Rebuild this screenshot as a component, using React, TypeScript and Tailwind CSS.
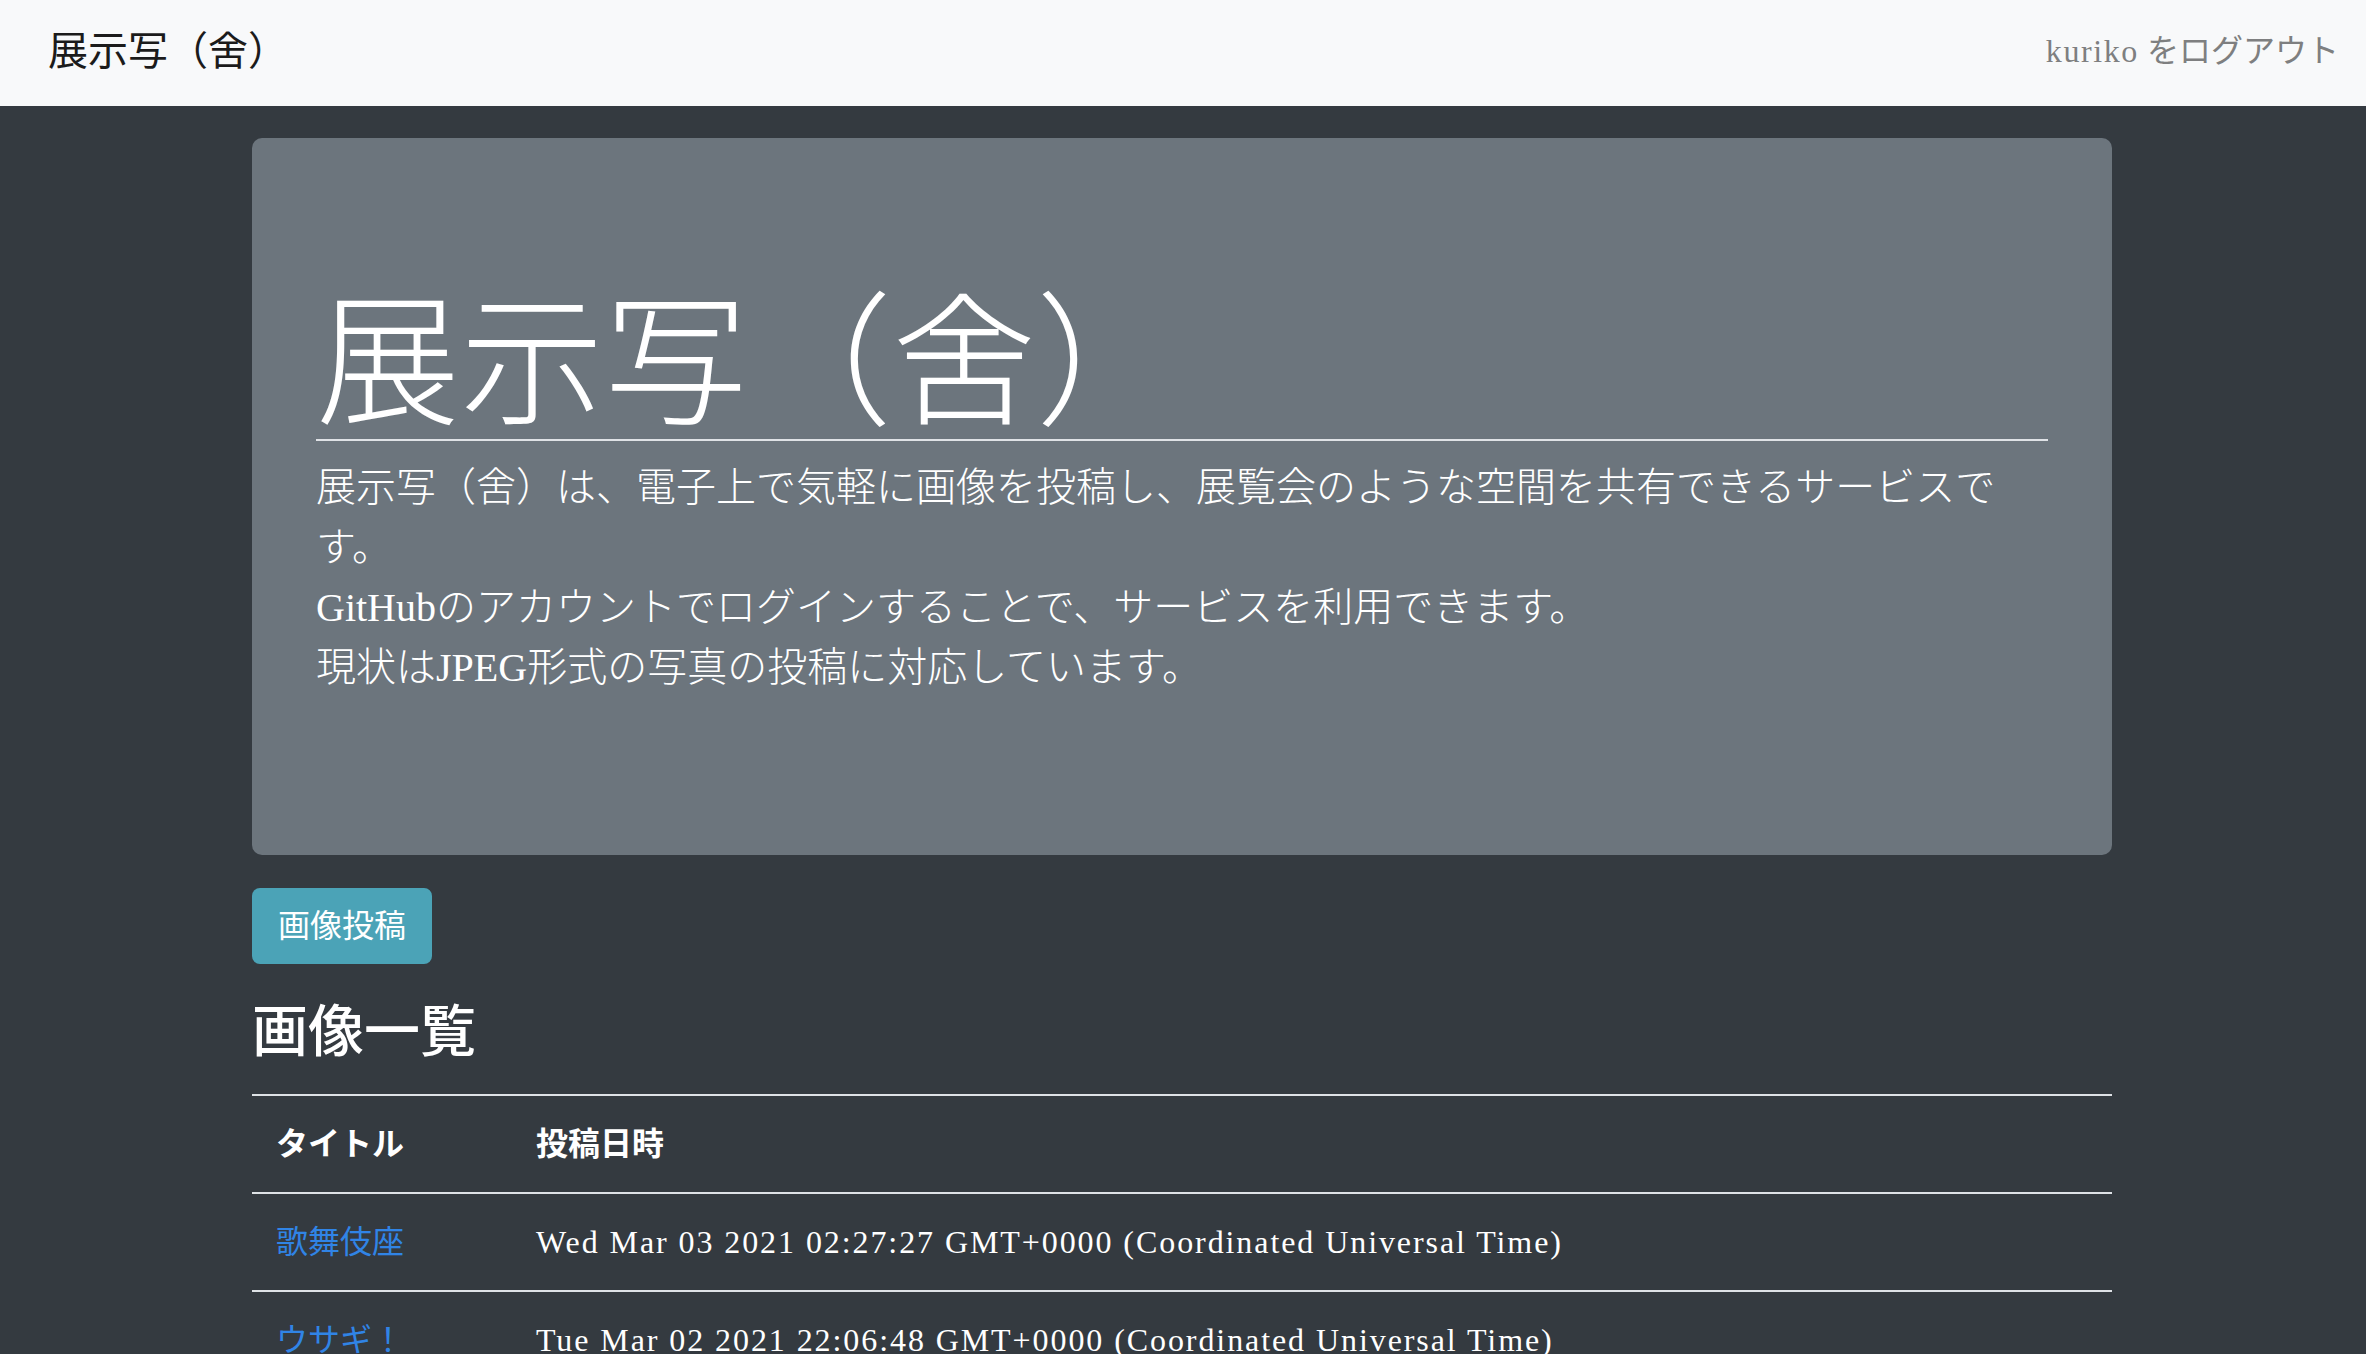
import React from 'react';

interface Photo {
  id: number;
  title: string;
  createdAt: string;
}

const PHOTOS: Photo[] = [
  { id: 1, title: '歌舞伎座', createdAt: 'Wed Mar 03 2021 02:27:27 GMT+0000 (Coordinated Universal Time)' },
  { id: 2, title: 'ウサギ！', createdAt: 'Tue Mar 02 2021 22:06:48 GMT+0000 (Coordinated Universal Time)' },
];

/* ---------------- NAVBAR ---------------- */
const Navbar: React.FC = () => (
  <nav className="h-[106px] shrink-0 bg-[#f8f9fa] flex items-center justify-between pl-[48px] pr-[27px]">
    <a href="#" className="text-[40px] leading-[60px] text-[#1b1b1b] -mt-[2px]">
      展示写（舍）
    </a>
    <a href="#" className="text-[32px] leading-[48px] text-[#7e7f80] -mt-[5px]">
      <span className="tracking-[0.05em]">kuriko</span> をログアウト
    </a>
  </nav>
);

/* ---------------- JUMBOTRON ---------------- */
const Jumbotron: React.FC = () => (
  <div className="rounded-[10px] bg-[#6c757d] px-[64px] pt-[155px] pb-[157px] text-white">
    <h1 className="text-[144px] leading-[146px] font-light">展示写（舍）</h1>
    <hr className="border-0 border-t-2 border-[#dfe2e6] mt-0 mb-[17px]" />
    <p className="text-[40px] leading-[60px] font-light">
      展示写（舍）は、電子上で気軽に画像を投稿し、展覧会のような空間を共有できるサービスです。
      <br />
      GitHubのアカウントでログインすることで、サービスを利用できます。
      <br />
      現状はJPEG形式の写真の投稿に対応しています。
    </p>
  </div>
);

/* ---------------- PHOTO TABLE ---------------- */
const PhotoTable: React.FC<{ photos: Photo[] }> = ({ photos }) => (
  <table className="w-full table-fixed border-collapse text-white text-[32px] leading-[48px]">
    <thead>
      <tr>
        <th className="w-[260px] text-left font-bold px-[24px] py-[24px] border-t-2 border-[#dee2e6]">
          タイトル
        </th>
        <th className="text-left font-bold px-[24px] py-[24px] border-t-2 border-[#dee2e6]">
          投稿日時
        </th>
      </tr>
    </thead>
    <tbody>
      {photos.map((p) => (
        <tr key={p.id}>
          <td className="px-[24px] py-[24px] border-t-2 border-[#dee2e6]">
            <a href="#" className="text-[#3084e6]">
              {p.title}
            </a>
          </td>
          <td className="px-[24px] py-[24px] border-t-2 border-[#dee2e6] whitespace-nowrap tracking-[0.06em]">
            {p.createdAt}
          </td>
        </tr>
      ))}
    </tbody>
  </table>
);

export default function App() {
  return (
    <div className="h-screen overflow-hidden flex flex-col bg-[#343a40] font-['Liberation_Serif','Noto_Sans_CJK_JP',serif]">
      <Navbar />

      <main className="ml-[252px] w-[1860px] pt-[32px]">
        <Jumbotron />

        <button
          type="button"
          className="mt-[33px] h-[76px] px-[26px] rounded-[8px] bg-[#4ba3b7] text-white text-[32px] leading-[48px]"
        >
          画像投稿
        </button>

        <h3 className="mt-[35px] mb-[28px] text-white text-[56px] leading-[67px] font-medium">
          画像一覧
        </h3>

        <PhotoTable photos={PHOTOS} />
      </main>
    </div>
  );
}
